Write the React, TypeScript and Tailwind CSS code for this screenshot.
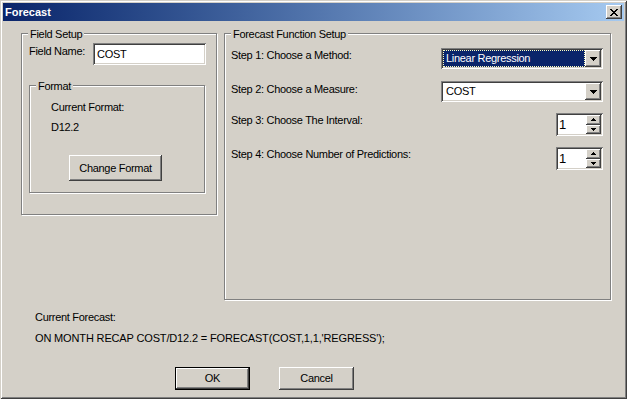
import type { ReactNode } from 'react';

const raised =
  'shadow-[inset_-1px_-1px_#404040,inset_1px_1px_#ffffff,inset_-2px_-2px_#808080,inset_2px_2px_#d4d0c8]';
const sunken =
  'shadow-[inset_1px_1px_#808080,inset_-1px_-1px_#ffffff,inset_2px_2px_#404040,inset_-2px_-2px_#d4d0c8]';

function Group({ label, className, children }: { label: string; className: string; children: ReactNode }) {
  return (
    <div className={`relative border border-[#808080] shadow-[1px_1px_0_#ffffff,inset_1px_1px_0_#ffffff] ${className}`}>
      <span className="absolute top-[-6px] left-[6px] bg-[#d4d0c8] px-[2px] leading-[13px]">{label}</span>
      {children}
    </div>
  );
}

function DownArrow() {
  return (
    <svg width="7" height="4" viewBox="0 0 7 4" shapeRendering="crispEdges">
      <path d="M0 0h7v1H0zM1 1h5v1H1zM2 2h3v1H2zM3 3h1v1H3z" fill="#000" />
    </svg>
  );
}

function Combo({ value, selected }: { value: string; selected?: boolean }) {
  return (
    <div className={`w-[162px] h-[21px] bg-white ${sunken} p-[2px] flex`}>
      <div
        className={`flex-1 flex items-center pl-[2px] border border-dotted ${
          selected ? 'bg-[#0a246a] text-white border-[#ffffc0]' : 'border-transparent'
        }`}
      >
        {value}
      </div>
      <div className={`w-[16px] h-full bg-[#d4d0c8] ${raised} flex items-center justify-center`}>
        <DownArrow />
      </div>
    </div>
  );
}

function SpinArrow({ up }: { up?: boolean }) {
  return (
    <svg width="5" height="3" viewBox="0 0 5 3" shapeRendering="crispEdges">
      {up ? (
        <path d="M2 0h1v1H2zM1 1h3v1H1zM0 2h5v1H0z" fill="#000" />
      ) : (
        <path d="M0 0h5v1H0zM1 1h3v1H1zM2 2h1v1H2z" fill="#000" />
      )}
    </svg>
  );
}

function Spin({ value }: { value: string }) {
  return (
    <div className={`w-[47px] h-[23px] bg-white ${sunken} p-[2px] flex`}>
      <div className="flex-1 flex items-center pl-[1px] text-[13px] tracking-normal">{value}</div>
      <div className="w-[15px] flex flex-col">
        <div className={`flex-1 bg-[#d4d0c8] ${raised} flex items-center justify-center`}>
          <SpinArrow up />
        </div>
        <div className={`flex-1 bg-[#d4d0c8] ${raised} flex items-center justify-center`}>
          <SpinArrow />
        </div>
      </div>
    </div>
  );
}

export default function App() {
  return (
    <div className="w-[627px] h-[399px] bg-[#d4d0c8] p-[3px] flex flex-col shadow-[inset_1px_1px_#d4d0c8,inset_-1px_-1px_#404040,inset_2px_2px_#ffffff,inset_-2px_-2px_#808080] font-['Liberation_Sans',Arial,sans-serif] text-[11px] leading-[13px] tracking-[-0.3px] text-black">
      {/* title bar */}
      <div className="h-[18px] flex items-center bg-gradient-to-r from-[#0a246a] to-[#a6caf0] pl-[2px] pr-[2px]">
        <span className="font-bold text-white tracking-normal">Forecast</span>
        <div className={`ml-auto w-[16px] h-[14px] bg-[#d4d0c8] ${raised} flex items-center justify-center`}>
          <svg width="8" height="7" viewBox="0 0 8 7" shapeRendering="crispEdges">
            <path
              d="M0 0h2v1H0zM6 0h2v1H6zM1 1h2v1H1zM5 1h2v1H5zM2 2h4v1H2zM3 3h2v1H3zM2 4h4v1H2zM1 5h2v1H1zM5 5h2v1H5zM0 6h2v1H0zM6 6h2v1H6z"
              fill="#000"
            />
          </svg>
        </div>
      </div>

      <div className="pl-[18px] pt-[12px]">
        <div className="flex items-start">
          <Group label="Field Setup" className="w-[196px] h-[182px]">
            <div className="flex items-start pl-[7px] pr-[10px] pt-[9px]">
              <span className="mt-[2px]">Field Name:</span>
              <div className={`ml-auto w-[113px] h-[22px] bg-white ${sunken} flex items-center pl-[4px]`}>COST</div>
            </div>
            <Group label="Format" className="ml-[7px] mt-[20px] w-[176px] h-[108px]">
              <div className="pl-[21px] pt-[15px]">Current Format:</div>
              <div className="pl-[21px] mt-[7px]">D12.2</div>
              <div
                className={`ml-[39px] mt-[21px] w-[93px] h-[26px] bg-[#d4d0c8] ${raised} flex items-center justify-center`}
              >
                Change Format
              </div>
            </Group>
          </Group>

          <Group label="Forecast Function Setup" className="ml-[7px] w-[387px] h-[267px]">
            <div className="flex flex-col pl-[6px] pr-[7px]">
              <div className="mt-[14px] flex items-start justify-between">
                <span className="mt-[1px]">Step 1: Choose a Method:</span>
                <Combo value="Linear Regression" selected />
              </div>
              <div className="mt-[12px] flex items-start justify-between">
                <span className="mt-[2px]">Step 2: Choose a Measure:</span>
                <Combo value="COST" />
              </div>
              <div className="mt-[11px] flex items-start justify-between">
                <span className="mt-[1px]">Step 3: Choose The Interval:</span>
                <Spin value="1" />
              </div>
              <div className="mt-[11px] flex items-start justify-between">
                <span className="mt-[1px]">Step 4: Choose Number of Predictions:</span>
                <Spin value="1" />
              </div>
            </div>
          </Group>
        </div>

        <div className="mt-[11px] pl-[14px]">Current Forecast:</div>
        <div className="mt-[8px] pl-[14px] tracking-[-0.15px]">
          ON MONTH RECAP COST/D12.2 = FORECAST(COST,1,1,'REGRESS');
        </div>

        <div className="mt-[22px] flex">
          <div
            className={`ml-[154px] w-[75px] h-[23px] border border-black bg-[#d4d0c8] ${raised} flex items-center justify-center`}
          >
            OK
          </div>
          <div className={`ml-[29px] w-[75px] h-[23px] bg-[#d4d0c8] ${raised} flex items-center justify-center`}>
            Cancel
          </div>
        </div>
      </div>
    </div>
  );
}
